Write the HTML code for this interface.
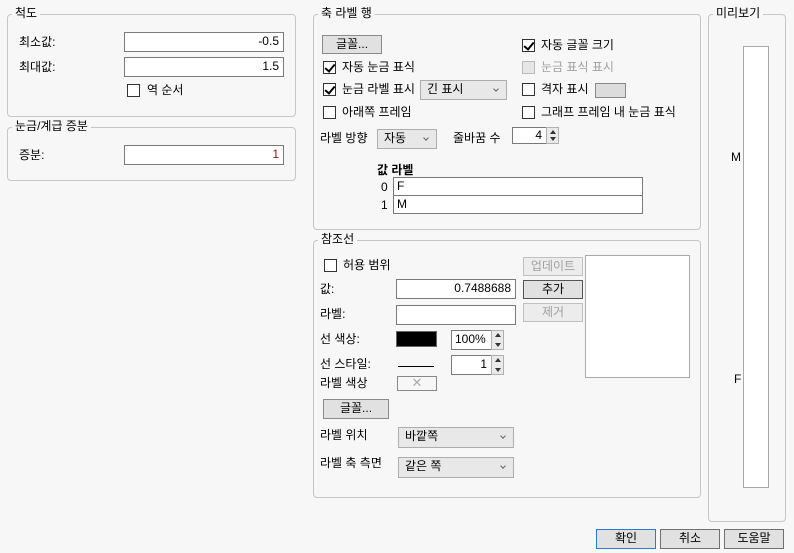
<!DOCTYPE html>
<html><head><meta charset="utf-8"><style>
*{box-sizing:border-box;margin:0;padding:0}
body{width:794px;height:553px;background:#f7f7f7;position:relative;overflow:hidden;font-family:"Liberation Sans","Noto Sans CJK KR","NanumGothic",sans-serif;font-size:12px;color:#000}
.a{position:absolute;white-space:nowrap;line-height:14px}
.g{position:absolute;border:1px solid #c6c6c6;border-radius:4px}
.lg{position:absolute;background:#f7f7f7;padding:0 3px;line-height:14px}
.in{position:absolute;background:#fff;border:1px solid #7a7a7a;text-align:right;padding-right:4px;line-height:16px}
.cb{position:absolute;width:13px;height:13px;background:#fff;border:1px solid #333}
.cb.k::after{content:"";position:absolute;left:3px;top:0px;width:4px;height:8px;border:solid #000;border-width:0 2px 2px 0;transform:rotate(40deg)}
.btn{position:absolute;background:#e1e1e1;border:1px solid #8a8a8a;text-align:center;line-height:16px}
.dd{position:absolute;background:#e8e8e8;border:1px solid #adadad;padding-left:6px;line-height:17px}
.dd::after{content:"";position:absolute;right:8px;top:6px;width:3px;height:3px;border:solid #666;border-width:0 1px 1px 0;transform:rotate(45deg)}
.sp{position:absolute;width:13px;background:#eaeaea;border:1px solid #b0b0b0}
.sp::before{content:"";position:absolute;left:3px;top:2px;border:3px solid transparent;border-bottom:4px solid #333;border-top:0}
.sp::after{content:"";position:absolute;left:3px;bottom:2px;border:3px solid transparent;border-top:4px solid #333;border-bottom:0}
.dis{color:#a0a0a0}
</style></head><body>
<!-- 척도 -->
<div class="g" style="left:7px;top:14px;width:289px;height:103px"></div>
<div class="lg" style="left:12px;top:6px">척도</div>
<div class="a" style="left:19px;top:35px">최소값:</div>
<div class="in" style="left:124px;top:32px;width:160px;height:20px">-0.5</div>
<div class="a" style="left:19px;top:60px">최대값:</div>
<div class="in" style="left:124px;top:57px;width:160px;height:20px">1.5</div>
<div class="cb" style="left:127px;top:84px"></div>
<div class="a" style="left:147px;top:83px">역 순서</div>
<!-- 눈금 -->
<div class="g" style="left:7px;top:127px;width:289px;height:54px"></div>
<div class="lg" style="left:12px;top:119px">눈금/계급 증분</div>
<div class="a" style="left:19px;top:148px">증분:</div>
<div class="in" style="left:124px;top:145px;width:160px;height:20px;color:#8b1a1a">1</div>
<!-- 축 라벨 행 -->
<div class="g" style="left:313px;top:14px;width:388px;height:216px"></div>
<div class="lg" style="left:318px;top:6px">축 라벨 행</div>
<div class="btn" style="left:322px;top:35px;width:60px;height:19px">글꼴...</div>
<div class="cb k" style="left:522px;top:39px"></div><div class="a" style="left:541px;top:38px">자동 글꼴 크기</div>
<div class="cb k" style="left:323px;top:61px"></div><div class="a" style="left:342px;top:60px">자동 눈금 표식</div>
<div class="cb" style="left:522px;top:61px;background:#e6e6e6;border-color:#bbb"></div><div class="a dis" style="left:541px;top:60px">눈금 표식 표시</div>
<div class="cb k" style="left:323px;top:83px"></div><div class="a" style="left:342px;top:82px">눈금 라벨 표시</div>
<div class="dd" style="left:420px;top:80px;width:87px;height:20px">긴 표시</div>
<div class="cb" style="left:522px;top:83px"></div><div class="a" style="left:541px;top:82px">격자 표시</div>
<div style="position:absolute;left:595px;top:83px;width:31px;height:15px;background:#dcdcdc;border:1px solid #888"></div>
<div class="cb" style="left:323px;top:106px"></div><div class="a" style="left:342px;top:105px">아래쪽 프레임</div>
<div class="cb" style="left:522px;top:106px"></div><div class="a" style="left:541px;top:105px">그래프 프레임 내 눈금 표식</div>
<div class="a" style="left:320px;top:131px">라벨 방향</div>
<div class="dd" style="left:377px;top:129px;width:60px;height:20px">자동</div>
<div class="a" style="left:453px;top:131px">줄바꿈 수</div>
<div class="in" style="left:512px;top:127px;width:35px;height:17px;line-height:14px">4</div>
<div class="sp" style="left:546px;top:127px;height:17px"></div>
<div class="a" style="left:377px;top:163px;font-weight:bold">값 라벨</div>
<div class="a" style="left:381px;top:180px">0</div>
<div class="in" style="left:393px;top:177px;width:250px;height:19px;text-align:left;padding-left:3px">F</div>
<div class="a" style="left:381px;top:198px">1</div>
<div class="in" style="left:393px;top:195px;width:250px;height:19px;text-align:left;padding-left:3px">M</div>
<!-- 참조선 -->
<div class="g" style="left:313px;top:240px;width:388px;height:258px"></div>
<div class="lg" style="left:318px;top:232px">참조선</div>
<div class="cb" style="left:324px;top:259px"></div><div class="a" style="left:343px;top:258px">허용 범위</div>
<div class="btn dis" style="left:523px;top:257px;width:60px;height:19px;background:#ececec;border-color:#c0c0c0">업데이트</div>
<div class="btn" style="left:523px;top:280px;width:60px;height:19px;border-color:#555">추가</div>
<div class="btn dis" style="left:523px;top:303px;width:60px;height:19px;background:#ececec;border-color:#c0c0c0">제거</div>
<div style="position:absolute;left:585px;top:255px;width:105px;height:123px;background:#fff;border:1px solid #a8a8a8"></div>
<div class="a" style="left:320px;top:282px">값:</div>
<div class="in" style="left:396px;top:279px;width:120px;height:20px">0.7488688</div>
<div class="a" style="left:320px;top:307px">라벨:</div>
<div class="in" style="left:396px;top:305px;width:120px;height:20px"></div>
<div class="a" style="left:320px;top:332px">선 색상:</div>
<div style="position:absolute;left:396px;top:331px;width:41px;height:16px;background:#000;border:1px solid #666"></div>
<div class="in" style="left:451px;top:330px;width:41px;height:20px;text-align:left;padding-left:3px">100%</div>
<div class="sp" style="left:491px;top:330px;height:20px"></div>
<div class="a" style="left:320px;top:357px">선 스타일:</div>
<div style="position:absolute;left:398px;top:366px;width:36px;height:1px;background:#000"></div>
<div class="in" style="left:451px;top:355px;width:41px;height:20px">1</div>
<div class="sp" style="left:491px;top:355px;height:20px"></div>
<div class="a" style="left:320px;top:376px">라벨 색상</div>
<div style="position:absolute;left:397px;top:376px;width:40px;height:15px;background:#f7f7f7;border:1px solid #888;text-align:center;line-height:12px;color:#aaa;font-size:13px">✕</div>
<div class="btn" style="left:323px;top:399px;width:66px;height:20px">글꼴...</div>
<div class="a" style="left:320px;top:428px">라벨 위치</div>
<div class="dd" style="left:398px;top:427px;width:116px;height:21px">바깥쪽</div>
<div class="a" style="left:320px;top:456px">라벨 축 측면</div>
<div class="dd" style="left:398px;top:457px;width:116px;height:21px">같은 쪽</div>
<!-- 미리보기 -->
<div class="g" style="left:708px;top:14px;width:78px;height:508px"></div>
<div class="lg" style="left:713px;top:6px">미리보기</div>
<div style="position:absolute;left:743px;top:46px;width:26px;height:442px;background:#fff;border:1px solid #a8a8a8"></div>
<div class="a" style="left:731px;top:150px">M</div>
<div class="a" style="left:734px;top:372px">F</div>
<!-- buttons -->
<div class="btn" style="left:596px;top:529px;width:60px;height:20px;border-color:#2a7ad5">확인</div>
<div class="btn" style="left:660px;top:529px;width:60px;height:20px;border-color:#707070">취소</div>
<div class="btn" style="left:724px;top:529px;width:60px;height:20px;border-color:#707070">도움말</div>
</body></html>
